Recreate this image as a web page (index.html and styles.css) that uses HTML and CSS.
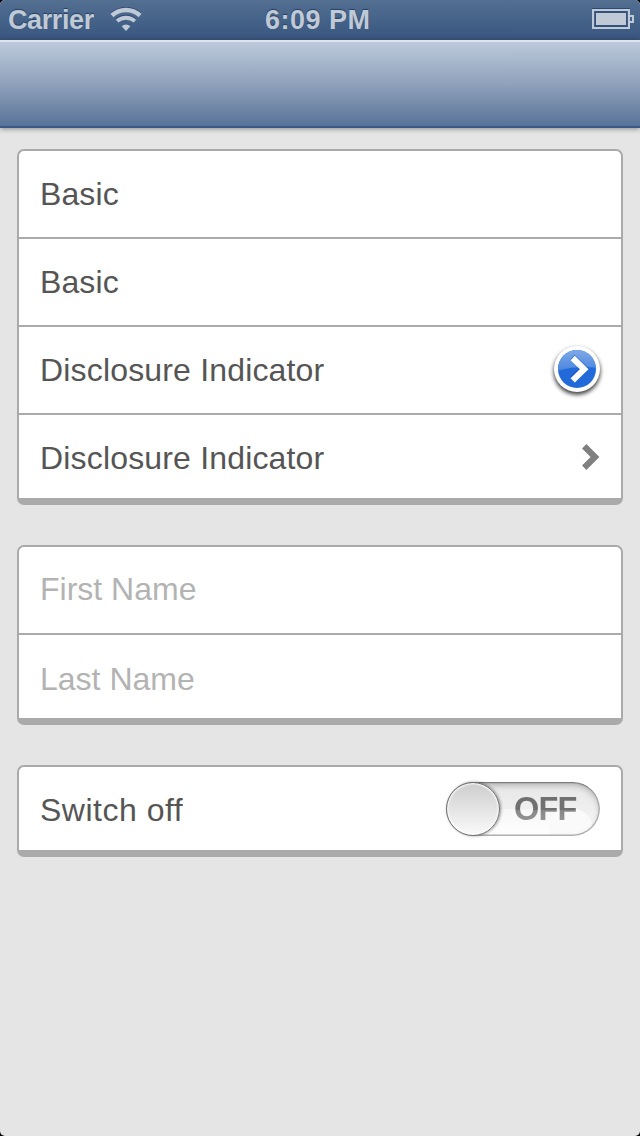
FILE: index.html
```html
<!DOCTYPE html>
<html lang="en">
<head>
<meta charset="utf-8">
<title>Form</title>
<link rel="stylesheet" href="styles.css">
</head>
<body>
<div class="screen">
  <header class="status-bar">
    <span class="carrier">Carrier</span>
    <svg class="wifi" width="32" height="28" viewBox="0 0 32 28">
      <g transform="translate(0 -1)" fill="none" stroke="#304a70" stroke-width="4.200">
        <path d="M1.900 10.500A21 21 0 0 1 30.100 10.500"/><path d="M7.100 16.200A13.200 13.200 0 0 1 24.900 16.200"/>
      </g>
      <path d="M1.900 10.500A21 21 0 0 1 30.100 10.500" fill="none" stroke="#c0cad6" stroke-width="4.400"/>
      <path d="M7.100 16.200A13.200 13.200 0 0 1 24.900 16.200" fill="none" stroke="#c0cad6" stroke-width="3.800"/>
      <path d="M16 26L11.600 21.200A7 7 0 0 1 20.400 21.200Z" fill="#c0cad6"/>
    </svg>
    <span class="clock">6:09 PM</span>
    <svg class="battery" width="42" height="22" viewBox="0 0 42 22">
      <path d="M0 .500H38M4 3.500H34" stroke="#2f4a70"/>
      <rect x="1" y="2" width="36" height="18" fill="none" stroke="#c0cad6" stroke-width="2"/>
      <rect x="3" y="3" width="32" height="16" fill="#35527c"/>
      <rect x="4" y="5" width="30" height="12" fill="#c0cad6"/>
      <path d="M38 8H41V14H38" fill="none" stroke="#c0cad6" stroke-width="2"/>
    </svg>
  </header>
  <nav class="nav-bar"></nav>
  <main class="content">
    <section class="card">
      <div class="row"><span class="label">Basic</span></div>
      <div class="row"><span class="label">Basic</span></div>
      <div class="row">
        <span class="label wide">Disclosure Indicator</span>
        <svg class="disclosure" width="60" height="60" viewBox="0 0 60 60">
          <defs>
            <linearGradient id="gloss" x1="0" y1="0" x2="0" y2="1">
              <stop offset="0" stop-color="#83ade9"/><stop offset="1" stop-color="#4a85de"/>
            </linearGradient>
            <filter id="soft" x="-30%" y="-30%" width="160%" height="160%"><feGaussianBlur stdDeviation="2.200"/></filter>
            <clipPath id="disc"><circle cx="30" cy="29" r="19"/></clipPath>
          </defs>
          <circle cx="30" cy="31.500" r="23.300" fill="#000" opacity=".75" filter="url(#soft)"/>
          <circle cx="30" cy="29" r="23" fill="#fff"/>
          <circle cx="30" cy="29" r="19" fill="#2269d9"/>
          <path d="M9 8H51V28Q30 25 9 31Z" fill="url(#gloss)" clip-path="url(#disc)"/>
          <path d="M25.500 17L37 28L25.500 39" fill="none" stroke="#174fae" stroke-width="6" opacity=".6"/>
          <path d="M25.700 18L37.200 29.200L25.700 40.400" fill="none" stroke="#fff" stroke-width="6"/>
        </svg>
      </div>
      <div class="row">
        <span class="label wide">Disclosure Indicator</span>
        <svg class="chevron" width="20" height="28" viewBox="0 0 20 28">
          <path d="M4.200 3.200L15 14L4.200 24.800" fill="none" stroke="#808080" stroke-width="6.200"/>
        </svg>
      </div>
    </section>
    <section class="card">
      <div class="row"><span class="label placeholder first">First Name</span></div>
      <div class="row"><span class="label placeholder last">Last Name</span></div>
    </section>
    <section class="card">
      <div class="row">
        <span class="label wider">Switch off</span>
        <div class="switch"><span class="switch-text">OFF</span><span class="knob"></span></div>
      </div>
    </section>
  </main>
</div>
</body>
</html>
```
FILE: styles.css
```css
body {
  margin: 0;
  background: #000;
  font-family: "Liberation Sans", Arial, sans-serif;
}
.screen {
  height: 1136px;
  overflow: hidden;
  border-radius: 5px;
  background: #e5e5e5;
}
.status-bar {
  display: grid;
  grid-template-columns: 102px 164px 1fr 42px;
  box-sizing: border-box;
  height: 40px;
  padding: 0 6px 0 8px;
  background: linear-gradient(#536f92, #3c5a82 85%, #3a5780);
  color: #c0cad6;
  font-size: 27px;
  font-weight: bold;
  line-height: 40px;
  text-shadow: 0 -1px 1px #263f63;
  white-space: nowrap;
}
.carrier { letter-spacing: -.4px; }
.wifi { margin-top: 5px; }
.clock { margin-left: -9px; letter-spacing: .5px; }
.battery { margin-top: 8px; }
.nav-bar {
  position: relative;
  box-sizing: border-box;
  height: 88px;
  border-top: 2px solid #dbe3ed;
  border-bottom: 2px solid #3a5986;
  background: linear-gradient(#bdc9db, #8fa2bb 50%, #587299);
  box-shadow: 0 1px 5px rgba(0, 0, 0, .4);
}
.content {
  display: flex;
  flex-direction: column;
  gap: 40px;
  padding: 21px 17px;
}
.card {
  border: 2px solid #aaa;
  border-bottom-width: 7px;
  border-radius: 7px;
  background: #fff;
}
.row {
  display: flex;
  justify-content: space-between;
  box-sizing: border-box;
  height: 88px;
  padding: 0 21px;
  border-bottom: 2px solid #aaa;
}
.row:last-child {
  height: 83px;
  border-bottom: 0;
}
.label {
  color: #555;
  font-size: 32px;
  line-height: 86px;
  letter-spacing: .1px;
  white-space: nowrap;
}
.wide { letter-spacing: .17px; }
.wider { letter-spacing: .5px; }
.placeholder {
  color: #b3b3b3;
  letter-spacing: 0;
}
.first { margin-top: -1px; }
.last { margin-top: 1px; }
.disclosure { margin: 13px -7px 0 0; }
.chevron { margin-top: 28px; }
.switch {
  position: relative;
  box-sizing: border-box;
  width: 154px;
  height: 54px;
  margin-top: 15px;
  border-radius: 27px;
  background:
    radial-gradient(ellipse 22px 20px at 125px 46px, #fafafa 97%, transparent) 0 0 / 100% 100% no-repeat,
    linear-gradient(transparent 27px, #f6f6f6 27px, #fff) 0 0 / 125px 100% no-repeat,
    linear-gradient(#e6e6e6, #efefef 50%, #f8f8f8);
  box-shadow: inset 0 2px 1px -1px #777, inset 0 0 0 1.500px #b0b0b0, inset 0 3px 6px rgba(0, 0, 0, .25);
}
.switch-text {
  display: block;
  padding-left: 68px;
  background: linear-gradient(#707070 0 50%, #858585 50%, #a0a0a0 85%);
  background-clip: text;
  -webkit-background-clip: text;
  color: transparent;
  font-size: 32.500px;
  font-weight: bold;
  line-height: 55px;
  letter-spacing: -.800px;
}
.knob {
  position: absolute;
  top: 0;
  left: 0;
  box-sizing: border-box;
  width: 54px;
  height: 54px;
  border: 1.500px solid #707070;
  border-radius: 50%;
  background: linear-gradient(#cdcdcd, #fafafa);
  box-shadow: inset 0 0 2px 1px #fff, 1px 0 3px rgba(0, 0, 0, .4);
}
```
